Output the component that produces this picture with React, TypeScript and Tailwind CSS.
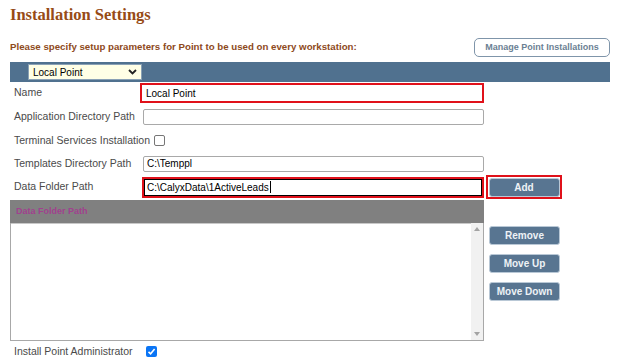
import React from 'react';

const labelCls = 'w-[129px] shrink-0 whitespace-nowrap text-[10.5px] text-[#4a4a4a]';
const inputCls = 'h-[16px] w-[341px] border border-[#a9a9a9] rounded-[2px] bg-white px-[3px] text-[10px] text-black outline-none';

function SideButton({ label }: { label: string }) {
  return (
    <button className="h-[19px] w-[71px] rounded-[3px] border border-[#b9c8d6] bg-[#587591] text-[10px] font-bold text-[#eef2f6]">
      {label}
    </button>
  );
}

export default function App() {
  return (
    <div className="relative h-[361px] w-[627px] overflow-hidden bg-white font-['Liberation_Sans',Arial,sans-serif]">
      <h1 className="pl-[10px] pt-[5px] font-['Liberation_Serif',serif] text-[16.5px] font-bold leading-[20px] text-[#974b16]">
        Installation Settings
      </h1>

      <div className="mt-[13px] flex items-center justify-between pl-[10px] pr-[17px]">
        <span className="text-[9.7px] font-bold text-[#8e4a1c]">
          Please specify setup parameters for Point to be used on every workstation:
        </span>
        <button className="h-[19px] w-[136px] rounded-[5px] border border-[#7f95aa] bg-white text-[9px] font-bold text-[#6b7f93]">
          Manage Point Installations
        </button>
      </div>

      {/* blue toolbar */}
      <div className="ml-[10px] mt-[5px] flex h-[20px] w-[600px] items-center bg-[#50718f] pl-[18px]">
        <div className="flex h-[16px] w-[114px] items-center justify-between border border-[#8aa1b5] bg-[#ffffe6] px-[4px] text-[10px] text-black">
          <span>Local Point</span>
          <svg width="9" height="6" viewBox="0 0 9 6">
            <path d="M1 1 L4.5 4.5 L8 1" fill="none" stroke="#222" strokeWidth="1.8" />
          </svg>
        </div>
      </div>

      <div className="flex flex-col pl-[14px]">
        <div className="mt-[1px] flex h-[20px] items-center">
          <span className="w-[126px] shrink-0 text-[10.5px] text-[#4a4a4a]">Name</span>
          <div className="flex h-[20px] w-[344px] items-center border-2 border-[#e0111a] bg-white pl-[4px] text-[10px] text-black">
            Local Point
          </div>
        </div>

        <div className="mt-[5px] flex h-[17px] items-center">
          <span className={labelCls}>Application Directory Path</span>
          <input readOnly value="" className={inputCls} />
        </div>

        <div className="mt-[7px] flex h-[17px] items-center">
          <span className="mr-[4px] whitespace-nowrap text-[10.5px] text-[#4a4a4a]">Terminal Services Installation</span>
          <span className="h-[11px] w-[11px] rounded-[2px] border border-[#767676] bg-white" />
        </div>

        <div className="mt-[6px] flex h-[17px] items-center">
          <span className={labelCls}>Templates Directory Path</span>
          <input readOnly value="C:\Temppl" className={inputCls} />
        </div>

        <div className="mt-[3px] flex h-[24px] items-center">
          <span className="w-[128px] shrink-0 text-[10.5px] text-[#4a4a4a]">Data Folder Path</span>
          <div className="flex h-[21px] w-[342px] items-center border-2 border-[#e0111a]">
            <div className="flex h-full w-full items-center border border-black bg-white pl-[2px] text-[10px] text-black">
              C:\CalyxData\1ActiveLeads<span className="ml-[1px] h-[12px] w-px bg-black" />
            </div>
          </div>
          <div className="ml-[2px] flex h-[24px] w-[76px] items-center justify-center border-2 border-[#e0111a] bg-white">
            <SideButton label="Add" />
          </div>
        </div>
      </div>

      <div className="flex">
        <div className="ml-[10px] flex w-[474px] flex-col">
          <div className="mt-[1px] flex h-[23px] items-center bg-[#808080] pl-[6px] text-[9px] font-bold text-[#a0418e]">
            Data Folder Path
          </div>
          <div className="flex h-[118px] border border-t-0 border-[#a8a8a8] bg-white">
            <div className="flex-1 border-t border-[#c8c8c8]" />
            <div className="flex w-[12px] flex-col items-center justify-between bg-[#f1f1f1] py-[4px]">
              <svg width="6" height="4" viewBox="0 0 6 4"><path d="M0 4 L3 0 L6 4Z" fill="#a3a3a3" /></svg>
              <svg width="6" height="4" viewBox="0 0 6 4"><path d="M0 0 L3 4 L6 0Z" fill="#a3a3a3" /></svg>
            </div>
          </div>
        </div>
        <div className="ml-[5px] mt-[27px] flex flex-col gap-[9px]">
          <SideButton label="Remove" />
          <SideButton label="Move Up" />
          <SideButton label="Move Down" />
        </div>
      </div>

      <div className="mt-[3px] flex items-center pl-[14px]">
        <span className="w-[132px] whitespace-nowrap text-[10.5px] text-[#4a4a4a]">Install Point Administrator</span>
        <span className="flex h-[11px] w-[11px] items-center justify-center rounded-[2px] bg-[#0b75f5]">
          <svg width="9" height="9" viewBox="0 0 9 9">
            <path d="M1.5 4.8 L3.6 6.8 L7.6 2" fill="none" stroke="white" strokeWidth="1.6" />
          </svg>
        </span>
      </div>
    </div>
  );
}
